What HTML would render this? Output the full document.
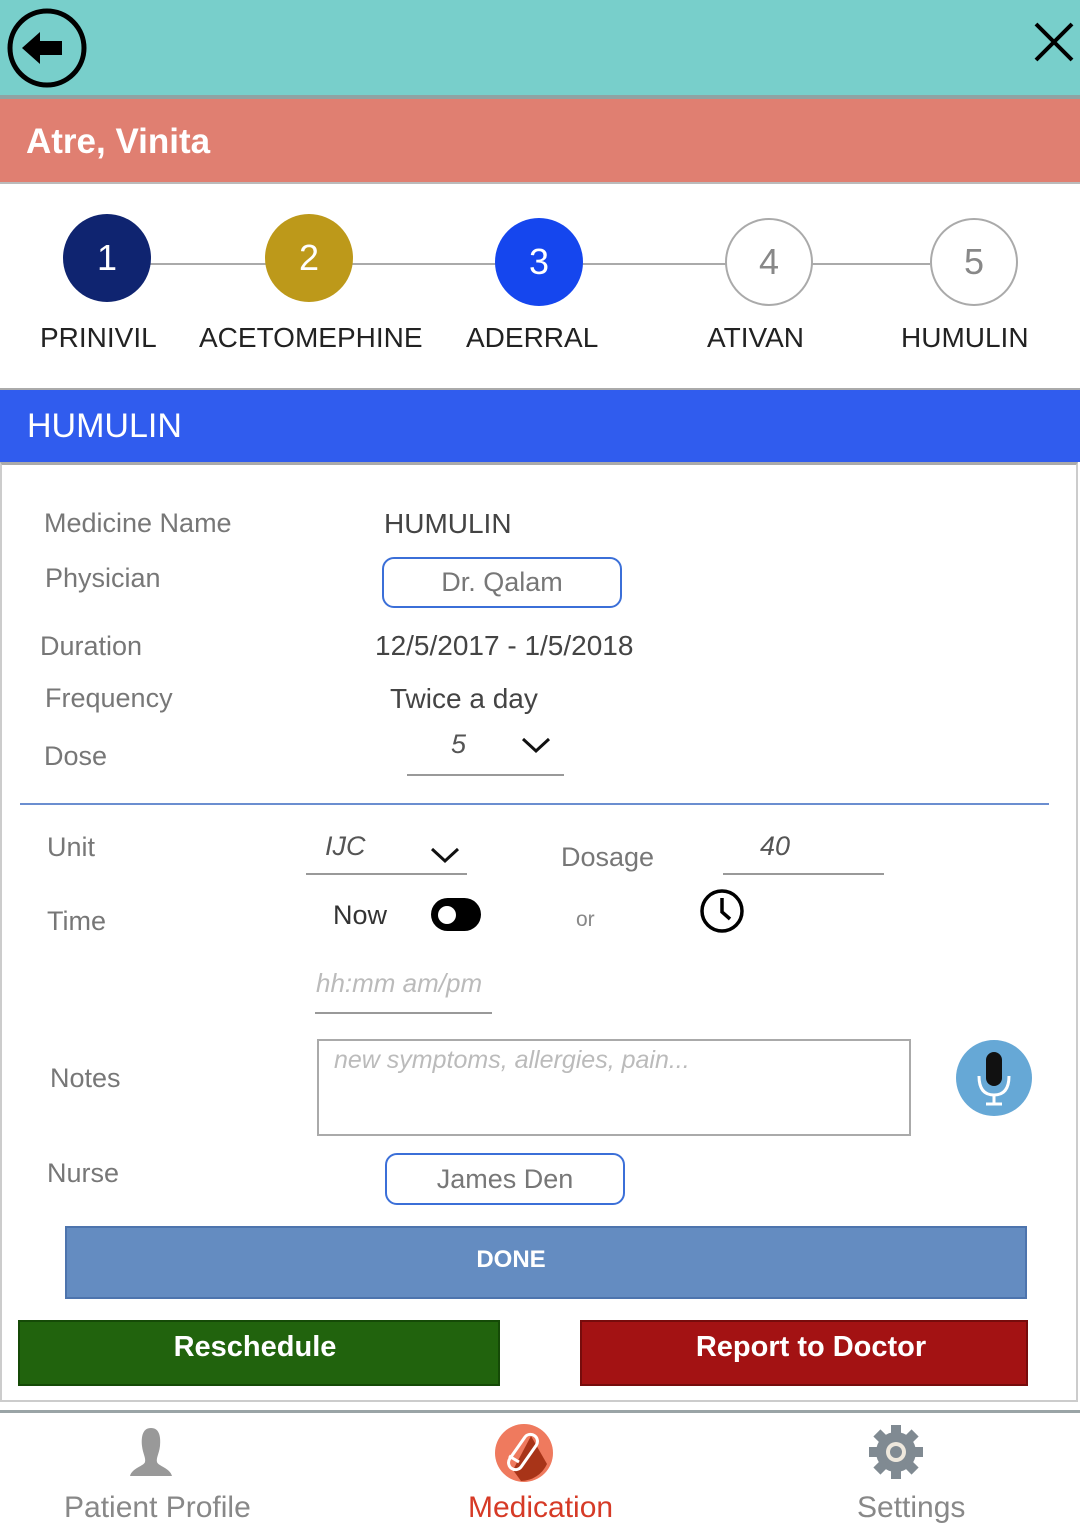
<!DOCTYPE html>
<html><head><meta charset="utf-8"><style>
*{margin:0;padding:0;box-sizing:border-box}
body{width:1080px;height:1517px;overflow:hidden;background:#fff;font-family:"Liberation Sans",sans-serif;position:relative}
.a{position:absolute;white-space:nowrap}
.lbl{color:#777;font-size:27px}
.val{color:#444;font-size:28px}
.c{position:absolute;width:88px;height:88px;border-radius:50%;color:#fff;font-size:36px;text-align:center;line-height:88px}
.st{font-size:28px;color:#222;position:absolute;top:322px}
.pill{position:absolute;border:2px solid #3b6fd8;border-radius:12px;color:#777;font-size:27px;text-align:center}
</style></head><body>
<div class="a" style="left:0;top:0;width:1080px;height:95px;background:#78cfcb"></div>
<div class="a" style="left:0;top:95px;width:1080px;height:4px;background:#8fa3a3"></div>
<svg class="a" style="left:6px;top:7px" width="82" height="82" viewBox="0 0 82 82"><circle cx="41" cy="41" r="37" fill="none" stroke="#000" stroke-width="5"/><path d="M16 41 L34 25 V34 H56 V48 H34 V57 Z" fill="#000"/></svg>
<svg class="a" style="left:1034px;top:22px" width="40" height="40"><path d="M2 2 L38 38 M38 2 L2 38" stroke="#000" stroke-width="4"/></svg>
<div class="a" style="left:0;top:99px;width:1080px;height:83px;background:#e07f71"></div>
<div class="a" style="left:0;top:182px;width:1080px;height:2px;background:#bbb"></div>
<div class="a" style="left:26px;top:122px;font-size:35px;font-weight:bold;color:#fff">Atre, Vinita</div>
<div class="a" style="left:150px;top:263px;width:780px;height:2px;background:#aaa"></div>
<div class="c" style="left:63px;top:214px;background:#0f2470">1</div>
<div class="c" style="left:265px;top:214px;background:#bd991a">2</div>
<div class="c" style="left:495px;top:218px;background:#1546ee">3</div>
<div class="c" style="left:725px;top:218px;background:#fff;border:2px solid #aaa;color:#888;line-height:84px">4</div>
<div class="c" style="left:930px;top:218px;background:#fff;border:2px solid #aaa;color:#888;line-height:84px">5</div>
<div class="st" style="left:40px">PRINIVIL</div>
<div class="st" style="left:199px">ACETOMEPHINE</div>
<div class="st" style="left:466px">ADERRAL</div>
<div class="st" style="left:707px">ATIVAN</div>
<div class="st" style="left:901px">HUMULIN</div>
<div class="a" style="left:0;top:388px;width:1080px;height:2px;background:#aaa"></div>
<div class="a" style="left:0;top:390px;width:1080px;height:72px;background:#305cee"></div>
<div class="a" style="left:27px;top:407px;font-size:34px;color:#fff">HUMULIN</div>
<div class="a" style="left:0;top:462px;width:1078px;height:940px;border:2px solid #ccc;border-top:3px solid #aaa"></div>
<div class="a lbl" style="left:44px;top:508px">Medicine Name</div>
<div class="a val" style="left:384px;top:508px">HUMULIN</div>
<div class="a lbl" style="left:45px;top:563px">Physician</div>
<div class="pill" style="left:382px;top:557px;width:240px;height:51px;line-height:47px">Dr. Qalam</div>
<div class="a lbl" style="left:40px;top:631px">Duration</div>
<div class="a val" style="left:375px;top:630px">12/5/2017 - 1/5/2018</div>
<div class="a lbl" style="left:45px;top:683px">Frequency</div>
<div class="a val" style="left:390px;top:683px">Twice a day</div>
<div class="a lbl" style="left:44px;top:741px">Dose</div>
<div class="a" style="left:451px;top:729px;font-size:27px;font-style:italic;color:#555">5</div>
<svg class="a" style="left:521px;top:736px" width="30" height="18"><path d="M2 3 L15 15 L28 3" fill="none" stroke="#111" stroke-width="3"/></svg>
<div class="a" style="left:407px;top:774px;width:157px;height:2px;background:#999"></div>
<div class="a" style="left:20px;top:803px;width:1029px;height:2px;background:#6b8ed0"></div>
<div class="a lbl" style="left:47px;top:832px">Unit</div>
<div class="a" style="left:325px;top:831px;font-size:27px;font-style:italic;color:#555">IJC</div>
<svg class="a" style="left:430px;top:846px" width="30" height="18"><path d="M2 3 L15 15 L28 3" fill="none" stroke="#111" stroke-width="3"/></svg>
<div class="a" style="left:306px;top:873px;width:161px;height:2px;background:#999"></div>
<div class="a lbl" style="left:561px;top:842px">Dosage</div>
<div class="a" style="left:760px;top:831px;font-size:27px;font-style:italic;color:#555">40</div>
<div class="a" style="left:723px;top:873px;width:161px;height:2px;background:#999"></div>
<div class="a lbl" style="left:47px;top:906px">Time</div>
<div class="a" style="left:333px;top:900px;font-size:27px;color:#333">Now</div>
<div class="a" style="left:431px;top:898px;width:50px;height:33px;border-radius:17px;background:#000"></div>
<div class="a" style="left:438px;top:906px;width:18px;height:18px;border-radius:50%;background:#fff"></div>
<div class="a" style="left:576px;top:908px;font-size:21px;color:#888">or</div>
<svg class="a" style="left:699px;top:888px" width="46" height="46"><circle cx="23" cy="23" r="20" fill="none" stroke="#000" stroke-width="3.5"/><path d="M23 10 V24 L31 31" fill="none" stroke="#000" stroke-width="3.5"/></svg>
<div class="a" style="left:316px;top:968px;font-size:26px;font-style:italic;color:#bbb">hh:mm am/pm</div>
<div class="a" style="left:315px;top:1012px;width:177px;height:2px;background:#999"></div>
<div class="a lbl" style="left:50px;top:1063px">Notes</div>
<div class="a" style="left:317px;top:1039px;width:594px;height:97px;border:2px solid #aaa"></div>
<div class="a" style="left:334px;top:1046px;font-size:25px;font-style:italic;color:#bbb">new symptoms, allergies, pain...</div>
<svg class="a" style="left:956px;top:1040px" width="76" height="76"><circle cx="38" cy="38" r="38" fill="#66a8d6"/><rect x="30" y="12" width="16" height="34" rx="8" fill="#111"/><path d="M23 36 Q23 55 38 55 Q53 55 53 36 M38 55 V64 M30 64 H46" fill="none" stroke="#fff" stroke-width="3"/></svg>
<div class="a lbl" style="left:47px;top:1158px">Nurse</div>
<div class="pill" style="left:385px;top:1153px;width:240px;height:52px;line-height:48px">James Den</div>
<div class="a" style="left:65px;top:1226px;width:962px;height:73px;background:#648cc1;border:2px solid #4d74ad;color:#fff;font-weight:bold;font-size:24px;text-align:center;line-height:64px;padding-right:70px">DONE</div>
<div class="a" style="left:18px;top:1320px;width:482px;height:66px;background:#21630d;border:2px solid #154a07;color:#fff;font-weight:bold;font-size:29px;text-align:center;line-height:50px;padding-right:8px">Reschedule</div>
<div class="a" style="left:580px;top:1320px;width:448px;height:66px;background:#a31213;border:2px solid #760c0c;color:#fff;font-weight:bold;font-size:29px;text-align:center;line-height:50px;padding-left:14px">Report to Doctor</div>
<div class="a" style="left:0;top:1410px;width:1080px;height:3px;background:#9aa4a6"></div>
<svg class="a" style="left:126px;top:1426px" width="50" height="52"><path d="M25 2 C17 2 15 10 16 20 C17 28 20 32 19 36 C18 40 6 42 4 50 H46 C44 42 32 40 31 36 C30 32 33 28 34 20 C35 10 33 2 25 2Z" fill="#999"/></svg>
<svg class="a" style="left:495px;top:1424px" width="58" height="58"><circle cx="29" cy="29" r="29" fill="#ef7a5e"/><path d="M36 12 L52 40 A29 29 0 0 1 26 57 L18 46Z" fill="#a83418"/><rect x="21" y="8" width="14" height="40" rx="7" transform="rotate(35 28 28)" fill="none" stroke="#fff" stroke-width="3"/><path d="M14 32 L24 38" stroke="#fff" stroke-width="3"/></svg>
<svg class="a" style="left:868px;top:1424px" width="56" height="56" viewBox="0 0 56 56"><g fill="#808a92"><circle cx="28" cy="28" r="20"/><g id="t"><rect x="23" y="1" width="10" height="12"/><rect x="23" y="43" width="10" height="12"/></g><use href="#t" transform="rotate(45 28 28)"/><use href="#t" transform="rotate(90 28 28)"/><use href="#t" transform="rotate(135 28 28)"/></g><circle cx="28" cy="28" r="10" fill="#eee8dd"/><circle cx="28" cy="28" r="6" fill="#808a92"/></svg>
<div class="a" style="left:64px;top:1491px;font-size:30px;color:#888">Patient Profile</div>
<div class="a" style="left:468px;top:1491px;font-size:30px;color:#d63a26">Medication</div>
<div class="a" style="left:857px;top:1491px;font-size:30px;color:#888">Settings</div>
</body></html>
